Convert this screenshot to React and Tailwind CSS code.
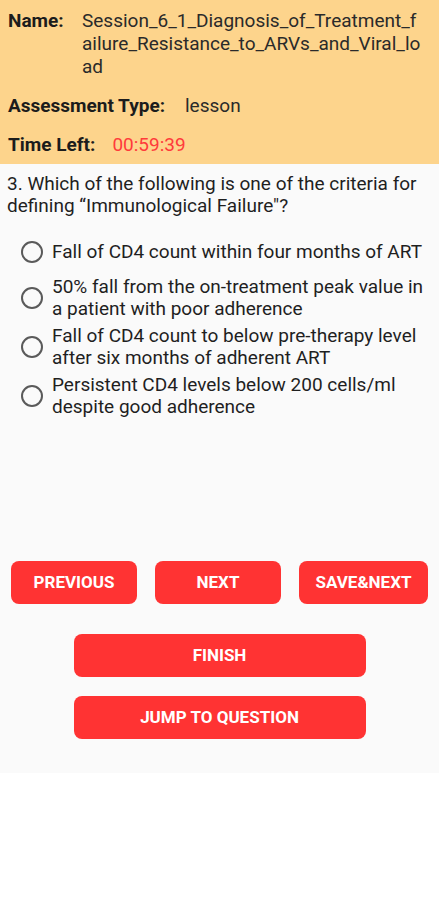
import React, { useState } from 'react';

const options = [
  'Fall of CD4 count within four months of ART',
  '50% fall from the on-treatment peak value in a patient with poor adherence',
  'Fall of CD4 count to below pre-therapy level after six months of adherent ART',
  'Persistent CD4 levels below 200 cells/ml despite good adherence',
];

const App = () => {
  const [selected, setSelected] = useState(null);

  return (
    <div className="min-h-screen bg-white font-['Roboto',sans-serif]">
      {/* Header info */}
      <header className="bg-[#fdd48c] px-2 pt-[9px] pb-[8px] text-[19px] leading-[23px]">
        <div className="flex">
          <span className="w-[74px] shrink-0 font-bold text-[#1c1c1c]">Name:</span>
          <span className="w-[342px] break-all text-[#2a2a2a]">
            Session_6_1_Diagnosis_of_Treatment_failure_Resistance_to_ARVs_and_Viral_load
          </span>
        </div>
        <div className="mt-[16px] flex">
          <span className="font-bold text-[#1c1c1c]">Assessment Type:</span>
          <span className="ml-[20px] text-[#2a2a2a]">lesson</span>
        </div>
        <div className="mt-[16px] flex">
          <span className="font-bold text-[#1c1c1c]">Time Left:</span>
          <span className="ml-[17px] text-[#ff3b3b]">00:59:39</span>
        </div>
      </header>

      {/* Question */}
      <main className="bg-[#fafafa] pb-[34px]">
        <p className="px-[7px] pt-[9px] text-[19px] leading-[22px] text-[#1f1f1f]">
          3. Which of the following is one of the criteria for defining “Immunological Failure"?
        </p>

        <div className="mt-[16px] flex flex-col gap-[5px] pl-[21px] pr-2">
          {options.map((opt, i) => (
            <button
              key={i}
              onClick={() => setSelected(i)}
              className="flex min-h-[38px] items-center gap-[9px] text-left"
            >
              <span className="flex h-[22px] w-[22px] shrink-0 items-center justify-center rounded-full border-2 border-[#5a5a5a]">
                {selected === i && <span className="h-[10px] w-[10px] rounded-full bg-[#ff3333]" />}
              </span>
              <span className="text-[19px] leading-[22px] text-[#1f1f1f]">{opt}</span>
            </button>
          ))}
        </div>

        {/* Navigation */}
        <div className="mt-[143px] flex gap-[18px] px-[11px]">
          <button className="h-[43px] w-[126px] rounded-lg bg-[#ff3333] text-[17px] font-bold text-white">PREVIOUS</button>
          <button className="h-[43px] w-[126px] rounded-lg bg-[#ff3333] text-[17px] font-bold text-white">NEXT</button>
          <button className="h-[43px] w-[129px] rounded-lg bg-[#ff3333] text-[17px] font-bold text-white">SAVE&amp;NEXT</button>
        </div>

        <button className="mx-auto mt-[30px] block h-[43px] w-[292px] rounded-lg bg-[#ff3333] text-[17px] font-bold text-white">FINISH</button>
        <button className="mx-auto mt-[19px] block h-[43px] w-[292px] rounded-lg bg-[#ff3333] text-[17px] font-bold text-white">JUMP TO QUESTION</button>
      </main>
    </div>
  );
};

export default App;
